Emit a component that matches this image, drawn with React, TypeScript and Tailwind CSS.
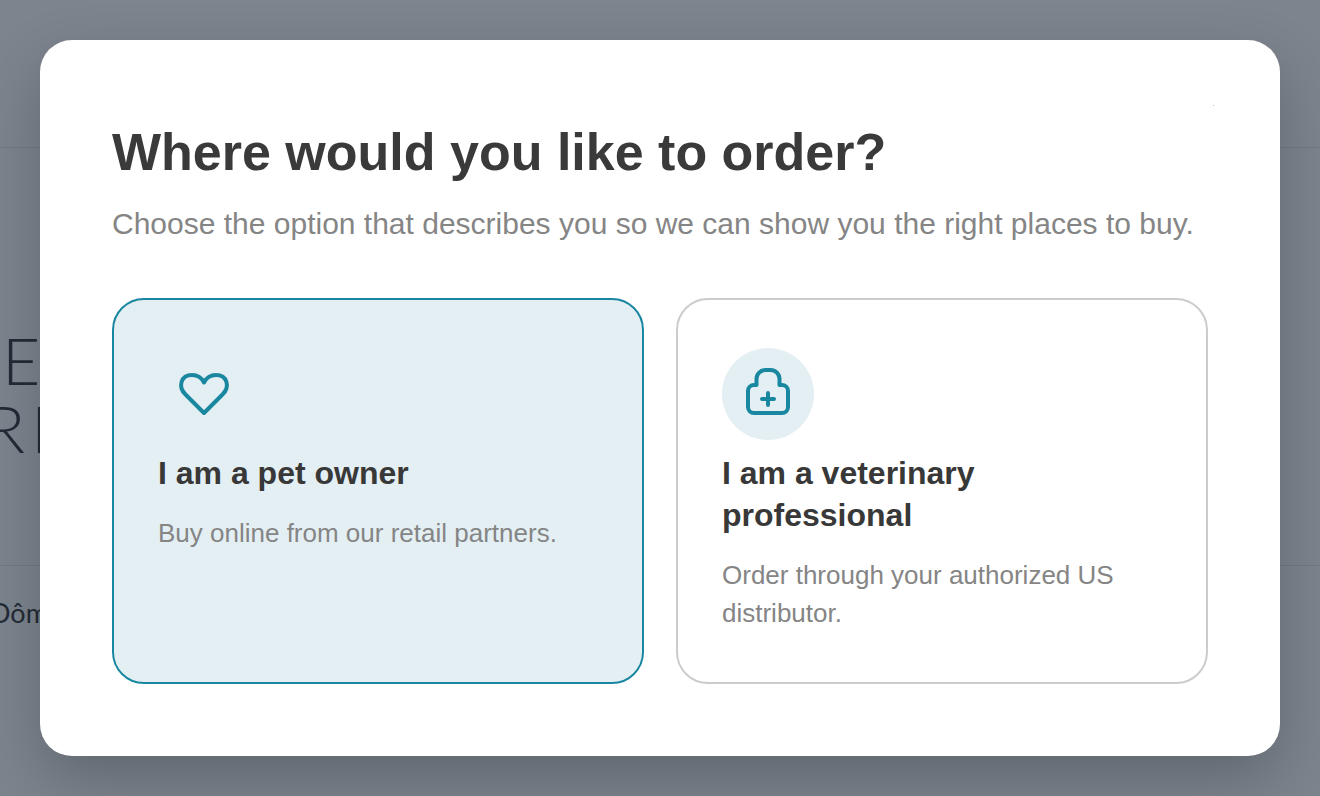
import React from "react";

const sans = "font-['Liberation_Sans',Arial,sans-serif]";

const HeartIcon = () => (
  <svg viewBox="0 0 92 92" className="size-[92px]" fill="none" stroke="#1a87a0" strokeWidth={4} strokeLinejoin="round" strokeLinecap="round">
    <path d="M46 65 L27.5 46.5 C19.5 38.5 23 27 34 27 C40 27 44 30.5 46 34.5 C48 30.5 52 27 58 27 C69 27 72.5 38.5 64.500 46.500 Z" />
  </svg>
);

const ClinicIcon = () => (
  <svg viewBox="0 0 92 92" className="size-[92px]" fill="none" stroke="#1a87a0" strokeWidth={4} strokeLinejoin="round" strokeLinecap="round">
    <path d="M34.500 37 V31 a9 9 0 0 1 9-9 h5 a9 9 0 0 1 9 9 V37 h2.500 a6 6 0 0 1 6 6 V59 a6 6 0 0 1-6 6 H32 a6 6 0 0 1-6-6 V43 a6 6 0 0 1 6-6 Z" />
    <path d="M46 45 V57 M40 51 H52" />
  </svg>
);

type OptionProps = {
  icon: React.ReactNode;
  title: string;
  text: string;
  selected?: boolean;
};

const Option = ({ icon, title, text, selected }: OptionProps) => (
  <div
    className={`h-[386px] rounded-[32px] border-2 px-[44px] pt-[48px] ${
      selected ? "border-[#1a87a0] bg-[#e4eff4]" : "border-[#cccccc] bg-white"
    }`}
  >
    <div className="flex size-[92px] items-center justify-center rounded-full bg-[#e4eff4]">{icon}</div>
    <h3 className="mt-[12px] text-[32px] leading-[42px] font-bold text-[#383838]">{title}</h3>
    <p className="mt-[20px] text-[26px] leading-[38px] text-[#858585]">{text}</p>
  </div>
);

export default function App() {
  return (
    <div className={`relative h-[796px] w-full overflow-hidden bg-[#7c848e] ${sans}`}>
      {/* page behind the backdrop */}
      <div className="flex flex-col font-['Lato',sans-serif] text-[#232b36]">
        <div className="h-[148px] border-b border-[#717983]" />
        <div className="h-[418px] border-b border-[#717983] pt-[178px]">
          <div className="text-[66px] leading-[68px] font-light">
            <div className="ml-[2px]">E</div>
            <div className="ml-[-15px] tracking-[6px]">RI</div>
          </div>
        </div>
        <div className="ml-[-10px] pt-[30px] text-[27px] leading-[34px]">Dôm</div>
      </div>

      <div className="absolute inset-[40px] rounded-[32px] bg-white px-[72px] pt-[80px] shadow-[0_24px_60px_rgba(0,0,0,0.22)]">
        <span className="absolute top-[65px] right-[66px] size-px bg-[#bbbbbb]" />
        <h2 className="text-[52px] leading-[64px] font-bold text-[#3a3a3a]">Where would you like to order?</h2>
        <p className="mt-[20px] text-[30px] leading-[40px] whitespace-nowrap text-[#858585]">
          Choose the option that describes you so we can show you the right places to buy.
        </p>
        <div className="mt-[54px] grid grid-cols-2 gap-[32px]">
          <Option
            selected
            icon={<HeartIcon />}
            title="I am a pet owner"
            text="Buy online from our retail partners."
          />
          <Option
            icon={<ClinicIcon />}
            title="I am a veterinary professional"
            text="Order through your authorized US distributor."
          />
        </div>
      </div>
    </div>
  );
}
